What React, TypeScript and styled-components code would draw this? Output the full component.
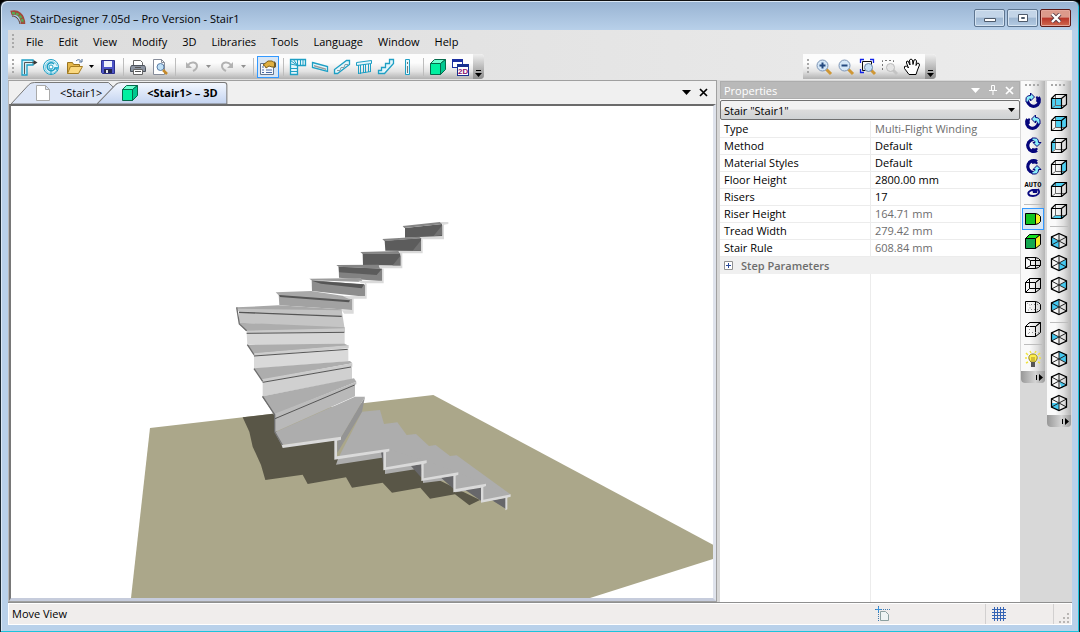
import React from "react";
import styled, { createGlobalStyle, css } from "styled-components";

const Global = createGlobalStyle`
  * { box-sizing: border-box; }
  html, body { margin: 0; height: 100%; background: #000; }
  body { font-family: "Open Sans", "Segoe UI", sans-serif; font-size: 11px; color: #000; }
  button, select { font: inherit; color: inherit; margin: 0; }
  svg { display: block; }
`;

const Window = styled.div`
  min-height: 100vh;
  display: flex;
  flex-direction: column;
  padding: 0 7px 7px;
  border: 1px solid #1c2a33;
  border-top-color: #111;
  border-radius: 7px 7px 0 0;
  background: linear-gradient(#98b3d2 0, #b9d1ea 30px);
  box-shadow: inset -1px -1px 0 #1cc3dc, inset 1px 1px 0 #dbe8f5;
`;

const TitleBar = styled.header`
  height: 29px;
  flex: none;
  display: flex;
  align-items: center;
  gap: 4px;
  padding: 5px 1px 0 2px;
`;

const Title = styled.h1`
  flex: 1;
  margin: 0;
  font-size: 11px;
  font-weight: 400;
`;

const Caption = styled.div`
  display: flex;
  gap: 2px;
`;

const CaptionButton = styled.button<{ $close?: boolean }>`
  width: 31px;
  height: 18px;
  padding: 0;
  display: grid;
  place-items: center;
  border-radius: 2px;
  border: 1px solid ${(p) => (p.$close ? "#5c1a17" : "#5d7590")};
  box-shadow: inset 0 0 0 1px ${(p) => (p.$close ? "#e5a79c" : "#d5e3f1")};
  background: ${(p) =>
    p.$close
      ? "linear-gradient(#dc9a8c 0 45%, #b9352a 50%, #cf6a50)"
      : "linear-gradient(#c3d5e8 0 45%, #9db6d1 50%, #b4cbe3)"};
`;

const Client = styled.div`
  flex: 1;
  display: flex;
  flex-direction: column;
  background: #d8d8d8;
`;

const Top = styled.div`
  background: linear-gradient(90deg, #dcdcdc, #ececec);
`;

const Grip = styled.span<{ $vertical?: boolean }>`
  flex: none;
  ${(p) =>
    p.$vertical
      ? css`
          width: 16px;
          height: 2px;
          margin: 3px auto 4px;
          background: repeating-linear-gradient(90deg, #a9a9a9 0 2px, transparent 2px 4px);
        `
      : css`
          width: 2px;
          height: 16px;
          margin: 0 4px;
          background: repeating-linear-gradient(#a9a9a9 0 2px, transparent 2px 4px);
        `}
`;

const MenuBar = styled.nav`
  height: 24px;
  display: flex;
  align-items: center;
  gap: 1px;
`;

const MenuItem = styled.button`
  padding: 0 7px 2px;
  height: 22px;
  border: 0;
  background: none;
`;

const Tools = styled.div`
  height: 26px;
  display: flex;
  align-items: flex-start;
  padding-right: 136px;
  justify-content: space-between;
`;

const ToolBar = styled.div<{ $vertical?: boolean }>`
  display: flex;
  flex: none;
  overflow: hidden;
  ${(p) =>
    p.$vertical
      ? css`
          width: 24px;
          flex-direction: column;
          border-radius: 0 0 4px 4px;
          background: linear-gradient(90deg, #fafafa 0 35%, #dedede 70%, #b4b4b4);
        `
      : css`
          height: 25px;
          align-items: center;
          border-radius: 0 4px 4px 0;
          background: linear-gradient(#fcfcfc 0 35%, #e2e2e2 70%, #b2b2b2);
        `}
`;

const ToolButton = styled.button<{ $on?: boolean }>`
  width: 22px;
  height: 22px;
  flex: none;
  align-self: center;
  display: grid;
  place-items: center;
  padding: 0;
  border: 1px solid ${(p) => (p.$on ? "#3399ff" : "transparent")};
  background: ${(p) => (p.$on ? "#d8e6f5" : "none")};
`;

const Split = styled.div`
  display: flex;
  padding-left: 2px;
`;

const SplitArrow = styled.button`
  width: 11px;
  height: 22px;
  padding: 0;
  border: 0;
  background: none;
  display: grid;
  place-items: center;
`;

const Separator = styled.span<{ $vertical?: boolean }>`
  flex: none;
  background: #bdbdbd;
  ${(p) =>
    p.$vertical
      ? css`
          height: 1px;
          margin: 4px 3px 3px;
        `
      : css`
          width: 1px;
          height: 18px;
          margin: 0 3px 0 4px;
        `}
`;

const Overflow = styled.button<{ $vertical?: boolean }>`
  border: 0;
  padding: 0;
  display: flex;
  ${(p) =>
    p.$vertical
      ? css`
          height: 12px;
          margin-top: 1px;
          align-items: center;
          justify-content: flex-end;
          padding-right: 2px;
          background: linear-gradient(90deg, #989898, #d4d4d4 60%, #9a9a9a);
        `
      : css`
          width: 11px;
          height: 25px;
          margin-left: 2px;
          align-items: flex-end;
          justify-content: center;
          padding-bottom: 2px;
          background: linear-gradient(#efefef, #8c8c8c);
        `}
`;

const Main = styled.main`
  flex: 1;
  display: flex;
  min-height: 0;
  border-bottom: 1px solid #8f8f8f;
`;

const Documents = styled.section`
  flex: 1;
  min-width: 0;
  display: flex;
  flex-direction: column;
  margin-right: 3px;
  border: 1px solid #a0a0a0;
  border-left-color: #b8b8b8;
  background: #f0f0f0;
`;

const TabRow = styled.div`
  height: 23px;
  display: flex;
  align-items: flex-end;
`;

const TabList = styled.div`
  display: flex;
  flex: 1;
  padding-left: 2px;
`;

const Tab = styled.button<{ $active?: boolean }>`
  height: 22px;
  position: relative;
  display: flex;
  align-items: center;
  gap: ${(p) => (p.$active ? 8 : 10)}px;
  padding: 0 ${(p) => (p.$active ? 10 : 12)}px 1px ${(p) => (p.$active ? 24 : 25)}px;
  margin-right: ${(p) => (p.$active ? 0 : -17)}px;
  border: 0;
  font-weight: ${(p) => (p.$active ? 700 : 400)};
  background: none;
  isolation: isolate;
`;

const TabShape = styled.svg`
  position: absolute;
  inset: 0;
  width: 100%;
  height: 100%;
  z-index: -1;
`;

const TabActions = styled.div`
  display: flex;
  padding: 0 4px 2px 0;
`;

const PlainButton = styled.button`
  width: 17px;
  height: 19px;
  padding: 0;
  border: 0;
  background: none;
  display: grid;
  place-items: center;
`;

const Canvas = styled.div`
  flex: 1;
  min-height: 0;
  display: flex;
  border: solid;
  border-width: 2px 3px 3px 2px;
  border-color: #6b6b6b #dfe3ec #c6ccdc #787878;
  background: #fff;
`;

const Scene = styled.svg`
  flex: 1;
  width: 0;
  height: 492px;
  min-height: 100%;
`;

const Panel = styled.aside`
  width: 300px;
  flex: none;
  display: flex;
  flex-direction: column;
  margin: 1px 1px 0 0;
  background: #fff linear-gradient(#ececec, #ececec) 150px 0 / 1px 100% no-repeat;
`;

const PanelTitle = styled.div`
  height: 18px;
  display: flex;
  align-items: center;
  padding: 0 1px 0 3px;
  border: 1px solid #adadad;
  background: #b9b9b9;
  color: #fff;
`;

const PanelName = styled.h2`
  flex: 1;
  margin: 0;
  font-size: 11px;
  font-weight: 400;
`;

const SelectWrap = styled.div`
  height: 22px;
  padding: 1px 0;
  display: grid;
  background: #fff;
`;

const Picker = styled.select`
  grid-area: 1 / 1;
  appearance: none;
  height: 20px;
  padding: 0 3px;
  border: 1px solid #707070;
  border-radius: 2px;
  background: linear-gradient(#f2f2f2 0 45%, #dcdcdc 50%, #cfd2d4);
`;

const PickerArrow = styled.span`
  grid-area: 1 / 1;
  place-self: center end;
  padding-right: 5px;
  pointer-events: none;
`;

const Grid = styled.table`
  width: 100%;
  border-collapse: separate;
  border-spacing: 0;
  table-layout: fixed;
`;

const Name = styled.th`
  width: 150px;
  height: 17px;
  padding: 0 4px;
  line-height: 16px;
  text-align: left;
  font-weight: 400;
  border-bottom: 1px solid #ececec;
`;

const Value = styled.td<{ $dim?: boolean }>`
  height: 17px;
  padding: 0 5px;
  line-height: 16px;
  border-bottom: 1px solid #ececec;
  color: ${(p) => (p.$dim ? "#6d6d6d" : "#000")};
`;

const Group = styled.button`
  height: 17px;
  flex: none;
  display: flex;
  align-items: center;
  gap: 8px;
  padding: 0 4px 1px;
  border: 0;
  background: #f0f0f0;
  color: #6d6d6d;
  font-weight: 600;
`;

const SideBars = styled.div`
  display: flex;
  align-items: flex-start;
  gap: 2px;
  padding: 1px 1px 0 0;
`;

const StatusBar = styled.footer`
  height: 22px;
  flex: none;
  display: flex;
  border: 1px solid #fff;
  background: #f0edec;
`;

const StatusText = styled.span`
  flex: 1;
  padding-left: 3px;
  line-height: 20px;
`;

const StatusCell = styled.span<{ $w: number }>`
  width: ${(p) => p.$w}px;
  display: flex;
  align-items: center;
  padding-left: 6px;
  border-right: 1px solid #d2d0d0;
`;

const Icon = ({ children, s = 18 }: { children: React.ReactNode; s?: number }) => (
  <svg width={s} height={s} viewBox={`0 0 ${s} ${s}`} fill="none" aria-hidden="true">
    {children}
  </svg>
);

const Down = ({ c = "#000", w = 5 }: { c?: string; w?: number }) => (
  <svg width={w} height={(w + 1) / 2} viewBox="0 0 10 6" preserveAspectRatio="none" aria-hidden="true">
    <path d="M0 0h10L5 6z" fill={c} />
  </svg>
);

const Cross = ({ c = "#000" }: { c?: string }) => (
  <svg width="9" height="9" viewBox="0 0 9 9" aria-hidden="true">
    <path d="M1 1l7 7M8 1l-7 7" stroke={c} strokeWidth="1.7" />
  </svg>
);

const MoreDown = () => (
  <svg width="7" height="7" viewBox="0 0 7 7" aria-hidden="true">
    <path d="M1 0h5v1H1zM0 3h7L3.5 7z" fill="#000" />
  </svg>
);

const MoreRight = () => (
  <svg width="7" height="7" viewBox="0 0 7 7" aria-hidden="true">
    <path d="M0 1h1v5H0zM3 0v7L7 3.500z" fill="#000" />
  </svg>
);

const blue = "#1e9fc4";

const icons: Record<string, React.ReactNode> = {
  flight: (
    <Icon>
      <path d="M2 17V2h11v5H7v10z" fill="#d3f0f8" stroke={blue} strokeWidth="1.300" />
      <path d="M4.500 16V4.500H15" stroke="#555" />
      <path d="M13.500 2l4 2.500-4 2.500z" fill="#333" />
    </Icon>
  ),
  spiral: (
    <Icon>
      <circle cx="9" cy="9" r="7.500" fill="#e4f6fb" stroke={blue} />
      <path d="M14 13A6 6 0 1 1 15 8" stroke="#7cc9e0" />
      <path d="M13 10a4 4 0 1 1-1-4" stroke={blue} strokeWidth="1.500" />
      <path d="M9 16.500V9" stroke={blue} />
      <path d="M12 9h5l-2.500 4z" fill="#35aed3" />
      <circle cx="9" cy="9" r="2" fill="#fff" stroke={blue} />
    </Icon>
  ),
  open: (
    <Icon>
      <path d="M1.500 15.500v-11h5l1 2h6v3" fill="#e6b84a" stroke="#9a7420" />
      <path d="M1.500 15.500l3-7h12l-4 7z" fill="#fbd980" stroke="#a77e22" />
      <path d="M10 3c2-2 4-1.500 5 .5M13 4h3V1" stroke="#4a6a94" />
    </Icon>
  ),
  save: (
    <Icon>
      <path d="M2.500 2.500h13v13h-12l-1-1z" fill="#4d55c8" stroke="#2c2f8c" />
      <path d="M5 3h8v6H5z" fill="#eef2fb" />
      <path d="M5 11h8v4H5z" fill="#23264f" />
      <path d="M7 12h2v3H7z" fill="#e8e8e8" />
    </Icon>
  ),
  print: (
    <Icon>
      <path d="M4.500 7V2.500h7l2 2V7" fill="#fff" stroke="#666" />
      <path d="M2.500 7.500h13l1 2v4h-15v-4z" fill="#8b93a0" stroke="#4d535c" />
      <path d="M4.500 11.500h9v5h-9z" fill="#fff" stroke="#666" />
      <path d="M6 9.500h6M6 13.500h6" stroke="#555" />
    </Icon>
  ),
  preview: (
    <Icon>
      <path d="M2.500 1.500h8l3 3v12h-11z" fill="#fff" stroke="#868c99" />
      <path d="M10.500 1.500v3h3" stroke="#868c99" />
      <circle cx="9.500" cy="9" r="3.500" fill="#bfe0f7" stroke="#5a7ca5" />
      <path d="M12 12l4 4" stroke="#c58a2a" strokeWidth="2.500" />
    </Icon>
  ),
  undo: (
    <Icon>
      <path d="M5 7c3-4 9-3 9 1 0 3-2 4-4 5" stroke="#b2b2b2" strokeWidth="2" />
      <path d="M3 4v6h6z" fill="#b2b2b2" />
    </Icon>
  ),
  redo: (
    <Icon>
      <path d="M13 7C10 3 4 4 4 8c0 3 2 4 4 5" stroke="#b2b2b2" strokeWidth="2" />
      <path d="M15 4v6H9z" fill="#b2b2b2" />
    </Icon>
  ),
  props: (
    <Icon>
      <path d="M1.500 5.500h13v11h-13z" fill="#f6f9fd" stroke="#62748e" />
      <path d="M3 9h2M3 12h2M3 14.500h2M7 12h6M7 14.500h6" stroke="#4a6aa5" />
      <path d="M4 7l5-4h4l3 2v4h-3l-3-1-3 2-1-2z" fill="#e0b040" stroke="#7f601a" />
      <path d="M15 3l2 2v4l-2 1z" fill="#6d5a2a" />
    </Icon>
  ),
  winder: (
    <Icon>
      <path d="M1.500 1.500h15v6h-8v9h-7z" fill="#e4f6fb" stroke={blue} strokeWidth="1.300" />
      <path d="M8.500 7.500l-7-5M8.500 7.500l-4-6M8.500 7.500V2M11.500 7V2M14 7V2M8.500 7.500l-7-1.500M8 10.500H2M8 13.500H2" stroke={blue} />
    </Icon>
  ),
  stringer: (
    <Icon>
      <path d="M1.500 4.500l15 4v5l-15-4z" fill="#e4f6fb" stroke={blue} strokeWidth="1.300" />
      <path d="M3 7l12 3.500v1.500L3 8.500z" fill="#9a9a9a" />
    </Icon>
  ),
  rail: (
    <Icon>
      <path d="M1.500 15.500v-4l12-9h3v4l-12 9z" fill="#e4f6fb" stroke={blue} strokeWidth="1.300" />
      <path d="M4 12.500h3l1-3h3l1-3h3" stroke="#8d9ca1" />
    </Icon>
  ),
  baluster: (
    <Icon>
      <path d="M1.500 4.500l15-2v3l-15 2z" fill="#e4f6fb" stroke={blue} />
      <path d="M3.500 7v9M5.500 7v9M8.500 6.500V15M10.500 6v9M13.500 6v8M15.500 6v8M3 15.500l13-2" stroke={blue} />
    </Icon>
  ),
  steps: (
    <Icon>
      <path d="M1.500 12.500h3v-3h4v-4h4v-4h4v4l-9 10h-6z" fill="#e4f6fb" stroke={blue} strokeWidth="1.300" />
    </Icon>
  ),
  post: (
    <Icon>
      <path d="M6.500 1.500h4v15h-4z" fill="#e4f6fb" stroke={blue} />
      <path d="M8.500 4v2M8.500 8v7" stroke="#777" />
    </Icon>
  ),
  cube: (
    <Icon>
      <path d="M1.500 5.500h10v11h-10z" fill="#00f0a0" stroke="#056b4c" />
      <path d="M1.500 5.500l4-4h11l-5 4z" fill="#6dffd0" stroke="#056b4c" />
      <path d="M11.500 5.500l5-4v10l-5 5z" fill="#00c890" stroke="#056b4c" />
    </Icon>
  ),
  views: (
    <Icon>
      <path d="M1 1h11v9H1z" fill="#1b2fa0" />
      <path d="M2 4h9v5H2z" fill="#fff" />
      <path d="M6 6h12v12H6z" fill="#173090" />
      <path d="M7 9h10v8H7z" fill="#fff" />
      <text x="7" y="16" fontFamily="Liberation Sans, sans-serif" fontWeight="700" fontSize="8" fill="#8a1070">2D</text>
    </Icon>
  ),
  zoomIn: (
    <Icon>
      <path d="M11 11l5 5" stroke="#cf9735" strokeWidth="3" />
      <circle cx="7.500" cy="7.500" r="5.500" fill="#d5e7f7" stroke="#7c94b5" />
      <path d="M4.500 7.500h6M7.500 4.500v6" stroke="#244a80" strokeWidth="2" />
    </Icon>
  ),
  zoomOut: (
    <Icon>
      <path d="M11 11l5 5" stroke="#cf9735" strokeWidth="3" />
      <circle cx="7.500" cy="7.500" r="5.500" fill="#d5e7f7" stroke="#7c94b5" />
      <path d="M4.500 7.500h6" stroke="#244a80" strokeWidth="2" />
    </Icon>
  ),
  zoomFit: (
    <Icon>
      <path d="M1.500 5V1.500H5M11 1.500h3.500V5M1.500 11v3.500H5" stroke="#1022e8" strokeWidth="1.300" />
      <path d="M3.500 12.500v-9h9v4M3.500 12.500h3" stroke="#111" />
      <path d="M12 12l4 4" stroke="#cf9735" strokeWidth="3" />
      <circle cx="9.500" cy="9.500" r="4" fill="#c5def4" stroke="#6c85a8" />
    </Icon>
  ),
  zoomBox: (
    <Icon>
      <path d="M1.500 12V2.500h11V5" stroke="#777" strokeDasharray="2 2" />
      <path d="M12 12l4 4" stroke="#c4c4c4" strokeWidth="3" />
      <circle cx="9.500" cy="9.500" r="4" fill="#e4e4e4" stroke="#bbb" />
    </Icon>
  ),
  pan: (
    <Icon>
      <path
        d="M6 16.500L1.500 10.500v-2l2-.5 2 2L3.500 5V3.500L5 3l2 4-.5-5L8 1l1.500 1L10 6.500 11 2l1.500-.5L13.500 3l-.5 4.500L14.500 5l1.500.5.5 1.500-2 5-1.500 4.500z"
        fill="#fff"
        stroke="#000"
      />
    </Icon>
  ),
  light: (
    <Icon>
      <path d="M2 3l2 2M16 3l-2 2M1 8h2M15 8h2M2 13l2-1M16 13l-2-1M6 1l1 2M12 1l-1 2" stroke="#f0e440" strokeWidth="1.500" />
      <path d="M7 12C3 8 5 4 9 4s6 4 2 8z" fill="#fff04a" stroke="#8b7d28" />
      <path d="M7 12h4v5H7z" fill="#555" />
      <path d="M8 7v4M10 7v4" stroke="#a58a20" />
    </Icon>
  ),
  auto: (
    <Icon>
      <text x="9" y="7" textAnchor="middle" fontFamily="Liberation Mono, monospace" fontWeight="700" fontSize="7" fill="#000">AUTO</text>
      <path d="M14 9c3 4-1 7-5 7-5 0-6-3-3-5 2-1.500 4-1 6-1" stroke="#080880" strokeWidth="1.800" />
      <path d="M8 9h6l-1 4H9z" fill="#080880" />
    </Icon>
  ),
};

const orbits: Record<string, string> = {
  right: "",
  rightLow: "translate(0 18) scale(1 -1)",
  up: "rotate(-90 9 9)",
  upMirror: "translate(18 0) scale(-1 1) rotate(-90 9 9)",
};

const Orbit = ({ to }: { to: string }) => (
  <Icon>
    <g transform={orbits[to]}>
      <path d="M13 14.500A6 6 0 1 1 9 3.500" stroke="#06067c" strokeWidth="3.200" />
      <path d="M13.500 12.500A5 4 0 0 1 8 13" stroke="#06067c" strokeWidth="2" />
      <path d="M8 2h3c2.500 0 3.500 2 3.500 4.500H17l-4 4-4-4h2C11 5 10 4.500 8 4.500z" fill="#8af0fa" stroke="#06067c" />
    </g>
  </Icon>
);

const faces: Record<string, string> = {
  front: "M1 6h11v11H1z",
  back: "M5 2h11v11H5z",
  left: "M1 6l4-4v11l-4 4z",
  right: "M12 6l4-4v11l-4 4z",
  top: "M1 6l4-4h11l-4 4z",
  bottom: "M1 17l4-4h11l-4 4z",
};

const Cube = ({ face }: { face: string }) => (
  <Icon>
    <path d={faces[face]} fill="#4fd0f2" />
    <path d="M5.500 2v11.500H16M1.500 16.500l4-3" stroke="#666" />
    <path d="M1.500 6.500h10v10h-10zM1.500 6.500l4-4h11v10l-5 4M11.500 6.500l5-4" stroke="#000" strokeWidth="1.200" />
  </Icon>
);

const isoFaces: Record<string, string> = {
  sw: "M1 5l8 4v8l-8-4z",
  se: "M17 5L9 9v8l8-4z",
  ne: "M9 1l8 4v8L9 9z",
  nw: "M9 1L1 5v8l8-4z",
  e: "M9 9l8-4v8z",
  w: "M1 5l8 4-5 3-3 1z",
  ese: "M9 9l7 3-4 4z",
  s: "M2 9l7 0v8l-7-4z",
};

const Iso = ({ face }: { face: string }) => (
  <Icon>
    <path d={isoFaces[face]} fill="#44c8f0" />
    <path d="M1.500 5l15 8M16.500 5l-15 8M9 1.500v15" stroke="#222" />
    <path d="M9 1.500L16.500 5v8L9 16.500 1.500 13V5z" stroke="#000" strokeWidth="1.300" />
  </Icon>
);

const Solid = ({ front, top, side, persp, dots }: { front?: string; top?: string; side?: string; persp?: boolean; dots?: boolean }) =>
  persp ? (
    <Icon>
      <path d="M1.500 3.500h10v11h-10z" fill={front || "none"} stroke="#000" />
      <path d="M11.500 3.500l3 1 2 2v5l-2 2-3 1z" fill={side || "none"} stroke="#000" />
      {!front && !dots && <path d="M1.500 3.500l5 3v5l-5 3M6.500 6.500h10M6.500 11.500h10" stroke="#000" />}
      {dots && <path d="M3 5l3 2v4l-3 2M7 6.500h9M7 11.500h9" stroke="#888" strokeDasharray="1 2" />}
    </Icon>
  ) : (
    <Icon>
      <path d="M1.500 6.500h10v10h-10z" fill={front || "none"} stroke="#000" />
      <path d="M1.500 6.500l4-4h11l-5 4z" fill={top || "none"} stroke="#000" />
      <path d="M11.500 6.500l5-4v10l-5 4z" fill={side || "none"} stroke="#000" />
      {!front && <path d="M5.500 3v9.500h11M2 16l3.500-3.500" stroke={dots ? "#888" : "#000"} strokeDasharray={dots ? "1 2" : undefined} />}
    </Icon>
  );

type Tool = [string, React.ReactNode, boolean?] | null;

const orbitTools: Tool[] = [
  ["Rotate up", <Orbit to="up" />],
  ["Rotate down", <Orbit to="upMirror" />],
  ["Rotate left", <Orbit to="right" />],
  ["Rotate right", <Orbit to="rightLow" />],
  ["Auto rotate", icons.auto],
  null,
  ["Perspective shaded", <Solid front="#12c422" side="#f4f020" persp />, true],
  ["Shaded", <Solid front="#13a850" top="#15e020" side="#f4f020" />],
  ["Perspective wireframe", <Solid persp />],
  ["Wireframe", <Solid />],
  ["Perspective hidden lines", <Solid persp dots />],
  ["Hidden lines", <Solid dots />],
  null,
  ["Light", icons.light],
];

const viewTools: Tool[] = [
  ...["front", "back", "left", "right", "top", "bottom"].map((f): Tool => [`View ${f}`, <Cube face={f} />]),
  null,
  ...["sw", "se", "e", "nw"].map((f): Tool => [`View ${f}`, <Iso face={f} />]),
  null,
  ...["w", "ne", "ese", "s"].map((f): Tool => [`View below ${f}`, <Iso face={f} />]),
];

const tool = (name: string) => (
  <ToolButton key={name} aria-label={name}>
    {icons[name]}
  </ToolButton>
);

const SplitTool = ({ name, dim }: { name: string; dim?: boolean }) => (
  <Split>
    {tool(name)}
    <SplitArrow aria-label={`${name} options`}>
      <Down c={dim ? "#909090" : "#000"} />
    </SplitArrow>
  </Split>
);

const SideBar = ({ tools, label }: { tools: Tool[]; label: string }) => (
  <ToolBar $vertical role="toolbar" aria-label={label}>
    <Grip $vertical />
    {tools.map((t, i) =>
      t ? (
        <ToolButton key={i} aria-label={t[0]} $on={t[2]}>
          {t[1]}
        </ToolButton>
      ) : (
        <Separator key={i} $vertical />
      )
    )}
    <Overflow $vertical aria-label="More">
      <MoreRight />
    </Overflow>
  </ToolBar>
);

const Stair = () => (
  <Scene viewBox="33 318 2106 1476" preserveAspectRatio="xMidYMid slice" role="img" aria-label="3D view of the stair">
    <path d="M450 1284L1300 1185l839 449v43l-369 117H393z" fill="#aba78a" />
    <g transform="translate(690 1140)">
      <path
        d="M38 112l102-12v60l20 40 160-20v55l145-20v50l90-15 60 45 135 65-32 16-43-33-75 13-29-33-85 15-28-30-92 15-18-31-115 20-15-28-112 16-13-45-25-55-10-45z"
        fill="#595647"
      />
      <path
        d="M396 95l54-5 12 42 40-5 28 38 28-3 39 36 20-3 43 33 20-2 160 116-82 20v-35l-83 10v-40l-96 12v-45l-114 18v-50l-147 22 7-20z"
        fill="#adadad"
      />
      <path d="M465 220L478 208 590 243 468 264zM578 255l12-12 95 36-107 18zM674 290l11-11 83 34-94 16zM756 323l12-10 74 32-86 16z" fill="#adadad" />
      <path d="M453 216h8v46zM543 258l32-6v42zM633 293l39-7v42zM703 328l51-9v44zM786 361l42-8v34z" fill="#67676a" />
      <path d="M405 50l-9 45-74 123v-40l11-6z" fill="#949494" />
      <path d="M135 157L375 50h30l-72 122-178 23z" fill="#adadad" />
      <path
        d="M155 195L333 170V179L321 182V229L478 206V214L468 217V262L590 241V249L581 252V295L685 277V284L677 287V327L768 311V318L760 321V359L842 343V350L832 353V388L826 391V354L753 368V323L670 337V288L574 303V253L460 271V217L313 239V182L158 204Z"
        fill="#dadada"
      />
      <path d="M98 48l37 54v55l22 38" stroke="#767676" strokeWidth="4" fill="none" />
    </g>
    <g transform="translate(660 630)">
      <path d="M555 54l111-12 2 38-113 3zM494 92l110-8v39l-108-1zM428 131l113-1 3 37-115-2z" fill="#5c5c5c" />
      <path d="M668 44v30l-28 5zM604 90v32h-26zM543 135v32h-26z" fill="#727272" />
      <path d="M356 170l130 6v38l-129-11z" fill="#828282" />
      <path d="M356 170l130 6-16 19-113-8z" fill="#5c5c5c" />
      <path d="M275 210l161 14v36l-160-17z" fill="#8d8d8d" />
      <path d="M275 212l158 11-8 12-122-14z" fill="#565656" />
      <path d="M176 254l220 12v34l-218-14z" fill="#a2a2a2" />
      <path
        d="M548 48l112-12 8 6-115 12zM487 87l113-7 6 5-113 8zM421 126l114-3 6 8-113 1zM349 165l127-1 4 12-124-6z"
        fill="#858585"
      />
      <path d="M268 206l155-2 5 12-153-5z" fill="#9c9c9c" />
      <path d="M167 247l107-4 112 17 6 10-216-14z" fill="#a8a8a8" />
      <path d="M177 255l213 16-3 6-207-16z" fill="#555" />
      <path
        d="M660 36h25v6l-13 2v44h-63l-11-7 69-3V43zM603 86l5 2v42h-68l-3-7h66zM542 130h5v45h-66l-3-8h64zM486 176h5v44h-68l-8-8h71zM434 216l6 6v44h-54l-18-7 67-1v-36zM385 262l16 3v46h-28l-8-10 31-1v-32z"
        fill="#dadada"
      />
      <path d="M49 292l126-6 190 12-1 12-308-7z" fill="#a8a8a8" />
      <path d="M51 296l314 5 3 18-313-15z" fill="#c2c2c2" />
      <path d="M57 303l311 15 6 39-317-19z" fill="#c5c5c5" />
      <path d="M57 307l308 12" stroke="#555" strokeWidth="4" />
      <path d="M57 338l317 14v8l-296 3z" fill="#adadad" />
      <path d="M80 362l295-7v12l-295 5z" fill="#cacaca" />
      <path d="M80 371l294-4v36H82z" fill="#d6d6d6" />
      <path d="M80 370l293-3" stroke="#555" strokeWidth="3" />
      <path d="M82 404l292-3 12 6-284 24z" fill="#adadad" />
      <path d="M100 430l286-24v9l-285 24z" fill="#cdcdcd" />
      <path d="M102 438l283-22v38l-283 22z" fill="#d9d9d9" />
      <path d="M102 438l281-20" stroke="#555" strokeWidth="3" />
      <path d="M102 475l288-22 7 7-271 50z" fill="#adadad" />
      <path d="M124 508l273-48v10l-270 47z" fill="#cbcbcb" />
      <path d="M128 517l268-47v38l-268 51z" fill="#d0d0d0" />
      <path d="M128 517l265-46" stroke="#555" strokeWidth="3" />
      <path d="M128 559l274-54 7 10-247 100z" fill="#adadad" />
      <path d="M162 612l247-97v8l-245 103z" fill="#bcbcbc" />
      <path d="M165 626l240-103v36l-240 107z" fill="#b9b9b9" />
      <path d="M165 626l239-101" stroke="#555" strokeWidth="3" />
      <path d="M50 292l8 50 22 20M82 404l20 30M102 476l26 38M128 560l36 54v53" stroke="#6d6d6d" strokeWidth="4" fill="none" />
    </g>
  </Scene>
);

const properties: [string, string, boolean][] = [
  ["Type", "Multi-Flight Winding", true],
  ["Method", "Default", false],
  ["Material Styles", "Default", false],
  ["Floor Height", "2800.00 mm", false],
  ["Risers", "17", false],
  ["Riser Height", "164.71 mm", true],
  ["Tread Width", "279.42 mm", true],
  ["Stair Rule", "608.84 mm", true],
];

const menus = ["File", "Edit", "View", "Modify", "3D", "Libraries", "Tools", "Language", "Window", "Help"];

export default function App() {
  return (
    <>
      <Global />
      <Window>
        <TitleBar>
          <svg width="16" height="16" viewBox="0 0 16 16" fill="none" aria-hidden="true">
            <path d="M1 3C7 1 13 5 13 14" stroke="#a4483a" strokeWidth="4.500" />
            <path d="M2 3c6 0 10 4 11 10" stroke="#55ab55" strokeWidth="2.500" strokeDasharray="3 1" />
            <path d="M2 6c4 0 7 3 8 8" stroke="#5c3a2c" />
          </svg>
          <Title>StairDesigner 7.05d – Pro Version - Stair1</Title>
          <Caption>
            <CaptionButton aria-label="Minimize">
              <svg width="12" height="10" viewBox="0 0 12 10"><path d="M.5 5.500h11v3H.5z" fill="#fff" stroke="#4d5a6b" /></svg>
            </CaptionButton>
            <CaptionButton aria-label="Maximize">
              <svg width="12" height="10" viewBox="0 0 12 10"><path d="M1.500 1.500h9v7h-9zM4.500 4.500h3v1h-3z" fill="#fff" stroke="#4d5a6b" /></svg>
            </CaptionButton>
            <CaptionButton aria-label="Close" $close>
              <svg width="12" height="10" viewBox="0 0 12 10">
                <path d="M2 1l8 8M10 1L2 9" stroke="#5a3a44" strokeWidth="4" />
                <path d="M2 1l8 8M10 1L2 9" stroke="#fff" strokeWidth="2.400" />
              </svg>
            </CaptionButton>
          </Caption>
        </TitleBar>
        <Client>
          <Top>
            <MenuBar>
              <Grip />
              {menus.map((m) => (
                <MenuItem key={m}>{m}</MenuItem>
              ))}
            </MenuBar>
            <Tools>
              <ToolBar role="toolbar" aria-label="Standard">
                <Grip />
                {["flight", "spiral"].map(tool)}
                <SplitTool name="open" />
                {tool("save")}
                <Separator />
                {["print", "preview"].map(tool)}
                <Separator />
                <SplitTool name="undo" dim />
                <SplitTool name="redo" dim />
                <Separator />
                <ToolButton $on aria-label="Properties">{icons.props}</ToolButton>
                <Separator />
                {["winder", "stringer", "rail", "baluster", "steps", "post"].map(tool)}
                <Separator />
                {["cube", "views"].map(tool)}
                <Overflow aria-label="More"><MoreDown /></Overflow>
              </ToolBar>
              <ToolBar role="toolbar" aria-label="Zoom">
                <Grip />
                {["zoomIn", "zoomOut", "zoomFit", "zoomBox", "pan"].map(tool)}
                <Overflow aria-label="More"><MoreDown /></Overflow>
              </ToolBar>
            </Tools>
          </Top>
          <Main>
            <Documents>
              <TabRow>
                <TabList role="tablist">
                  <Tab role="tab">
                    <TabShape viewBox="0 0 106 22" preserveAspectRatio="none">
                      <path d="M0 22L18 3Q20 .5 24 .5H100L106 6V22z" fill="#dde6f7" stroke="#777" />
                    </TabShape>
                    <svg width="14" height="16" viewBox="0 0 14 16"><path d="M.5.5h9l4 4v11H.5zM9.500.5v4h4" fill="#fff" stroke="#aaa" /></svg>
                    &lt;Stair1&gt;
                  </Tab>
                  <Tab role="tab" aria-selected $active>
                    <TabShape viewBox="0 0 128 22" preserveAspectRatio="none">
                      <defs>
                        <linearGradient id="tab" x1="0" y1="0" x2="0" y2="1">
                          <stop offset="0" stopColor="#f4f8ff" />
                          <stop offset="1" stopColor="#c3d3f0" />
                        </linearGradient>
                      </defs>
                      <path d="M0 22L18 3Q20 .5 24 .5H125Q127.500.5 127.500 3V22z" fill="url(#tab)" stroke="#777" />
                    </TabShape>
                    {icons.cube}
                    &lt;Stair1&gt; – 3D
                  </Tab>
                </TabList>
                <TabActions>
                  <PlainButton aria-label="Documents"><Down w={9} /></PlainButton>
                  <PlainButton aria-label="Close document"><Cross /></PlainButton>
                </TabActions>
              </TabRow>
              <Canvas>
                <Stair />
              </Canvas>
            </Documents>
            <Panel>
              <PanelTitle>
                <PanelName>Properties</PanelName>
                <PlainButton aria-label="Panel menu"><Down c="#fff" w={9} /></PlainButton>
                <PlainButton aria-label="Pin">
                  <svg width="8" height="10" viewBox="0 0 8 10"><path d="M2.500 5.500v-5h3v5M0 5.500h8M4 6v4M5.500 1v5" stroke="#fff" fill="none" /></svg>
                </PlainButton>
                <PlainButton aria-label="Close panel"><Cross c="#fff" /></PlainButton>
              </PanelTitle>
              <SelectWrap>
                <Picker aria-label="Selected object">
                  <option>Stair "Stair1"</option>
                </Picker>
                <PickerArrow><Down w={7} /></PickerArrow>
              </SelectWrap>
              <Grid>
                <tbody>
                  {properties.map(([n, v, dim]) => (
                    <tr key={n}>
                      <Name scope="row">{n}</Name>
                      <Value $dim={dim}>{v}</Value>
                    </tr>
                  ))}
                </tbody>
              </Grid>
              <Group>
                <svg width="9" height="9" viewBox="0 0 9 9"><path d="M.5.5h8v8h-8z" fill="#fff" stroke="#909090" /><path d="M2 4.500h5M4.500 2v5" stroke="#2a4a9a" /></svg>
                Step Parameters
              </Group>
            </Panel>
            <SideBars>
              <SideBar tools={orbitTools} label="Display" />
              <SideBar tools={viewTools} label="Views" />
            </SideBars>
          </Main>
          <StatusBar>
            <StatusText>Move View</StatusText>
            <StatusCell $w={117}>
              <svg width="16" height="16" viewBox="0 0 16 16" fill="none">
                <path d="M3.500 0v16M0 3.500h16" stroke="#3f7ab0" strokeDasharray="1 1" />
                <path d="M3.500 1v5M1 3.500h5" stroke="#3a94dc" />
                <path d="M5.500 5.500h5l3 3v6h-8z" fill="#eef4f4" stroke="#8ca0a0" />
              </svg>
            </StatusCell>
            <StatusCell $w={68}>
              <svg width="14" height="14" viewBox="0 0 14 14"><path d="M2.500 0v14M5.500 0v14M8.500 0v14M11.500 0v14M0 2.500h14M0 5.500h14M0 8.500h14M0 11.500h14" stroke="#3564b4" /></svg>
            </StatusCell>
            <svg width="17" height="19" viewBox="0 0 17 19"><path d="M13 9h2v2h-2zM9 13h2v2H9zM13 13h2v2h-2zM5 17h2v2H5zM9 17h2v2H9zM13 17h2v2h-2z" fill="#b9b6b4" /></svg>
          </StatusBar>
        </Client>
      </Window>
    </>
  );
}
